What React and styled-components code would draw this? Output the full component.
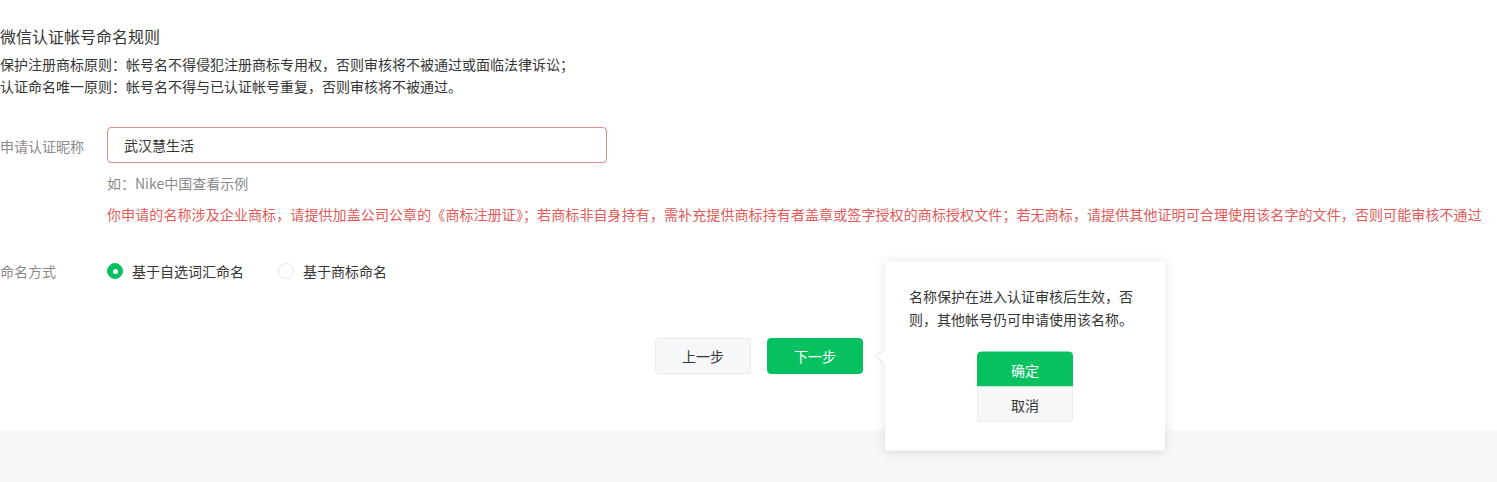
import React from "react";
import styled, { createGlobalStyle } from "styled-components";

const GlobalStyle = createGlobalStyle`
  html, body { margin: 0; padding: 0; }
  body {
    background: #f6f7f9;
    font-family: "Noto Sans CJK SC", "Noto Sans", sans-serif;
    font-size: 14px;
    color: #353535;
  }
  * { box-sizing: border-box; }
`;

const Page = styled.div`
  min-height: 100vh;
  background: #f6f7f9;
`;

const Main = styled.main`
  background: #fff;
  height: 430px;
  padding-top: 25px;
`;

const Title = styled.h2`
  margin: 0;
  font-size: 16px;
  font-weight: 400;
  line-height: 22px;
  color: #353535;
`;

const Rules = styled.div`
  margin-top: 6px;
`;

const Rule = styled.p`
  margin: 0;
  font-size: 14px;
  line-height: 22px;
  color: #353535;
`;

const FormRow = styled.div`
  display: flex;
  align-items: ${(p) => (p.$center ? "center" : "flex-start")};
  margin-top: ${(p) => p.$top}px;
`;

const Label = styled.label`
  width: 107px;
  flex: none;
  color: #8a8a8a;
  font-size: 14px;
  line-height: 20px;
  padding-top: ${(p) => p.$pt || 0}px;
`;

const Field = styled.div`
  display: flex;
  flex-direction: column;
`;

const Input = styled.input`
  width: 500px;
  height: 36px;
  padding: 0 16px;
  border: 1px solid #dd8c8c;
  border-radius: 4px;
  font-family: inherit;
  font-size: 14px;
  color: #353535;
  outline: none;
  background: #fff;
`;

const Hint = styled.div`
  margin-top: 10px;
  color: #8a8a8a;
  font-size: 14px;
  line-height: 20px;
`;

const ErrorText = styled.div`
  margin-top: 11px;
  color: #e05a58;
  font-size: 14px;
  line-height: 20px;
  letter-spacing: 0.1px;
  white-space: nowrap;
`;

const RadioGroup = styled.div`
  display: flex;
  align-items: center;
  gap: 34px;
`;

const RadioItem = styled.label`
  display: flex;
  align-items: center;
  gap: 9px;
  font-size: 14px;
  line-height: 20px;
  color: #353535;
`;

const RadioDot = styled.span`
  width: 16px;
  height: 16px;
  border-radius: 50%;
  flex: none;
  display: flex;
  align-items: center;
  justify-content: center;
  background: ${(p) => (p.$checked ? "#07c160" : "#fff")};
  border: 1px solid ${(p) => (p.$checked ? "#07c160" : "#e6e6e6")};
  &::after {
    content: "";
    width: 5px;
    height: 5px;
    border-radius: 50%;
    background: #fff;
    display: ${(p) => (p.$checked ? "block" : "none")};
  }
`;

const Actions = styled.div`
  display: flex;
  justify-content: center;
  gap: 16px;
  margin-top: 57px;
  padding-left: 21px;
`;

const Button = styled.button`
  width: 96px;
  height: 36px;
  border-radius: 4px;
  font-family: inherit;
  font-size: 14px;
  cursor: pointer;
  background: ${(p) => (p.$primary ? "#07c160" : "#f6f7f8")};
  color: ${(p) => (p.$primary ? "#fff" : "#353535")};
  border: 1px solid ${(p) => (p.$primary ? "#07c160" : "#ebebeb")};
`;

const Anchor = styled.div`
  position: relative;
`;

const Popover = styled.div`
  position: absolute;
  left: calc(100% + 22px);
  top: 50%;
  transform: translateY(-50%);
  width: 280px;
  padding: 23px 24px 28px;
  background: #fff;
  box-shadow: 0 1px 12px rgba(0, 0, 0, 0.12);
  border-radius: 2px;
  z-index: 10;
  &::before {
    content: "";
    position: absolute;
    left: -5px;
    top: 50%;
    width: 10px;
    height: 10px;
    margin-top: -5px;
    background: #fff;
    transform: rotate(45deg);
    box-shadow: -2px 2px 3px rgba(0, 0, 0, 0.05);
  }
`;

const PopText = styled.p`
  margin: 0;
  font-size: 14px;
  line-height: 23px;
  color: #353535;
`;

const PopActions = styled.div`
  display: flex;
  flex-direction: column;
  align-items: center;
  margin-top: 21px;
`;

const PopButton = styled(Button)`
  height: 35px;
  border-radius: ${(p) => (p.$primary ? "4px 4px 0 0" : "0 0 4px 4px")};
  border-color: ${(p) => (p.$primary ? "#07c160" : "#ececec")};
  ${(p) => (p.$primary ? "" : "border-top: none; height: 36px;")}
`;

export default function App() {
  return (
    <Page>
      <GlobalStyle />
      <Main>
        <Title>微信认证帐号命名规则</Title>
        <Rules>
          <Rule>保护注册商标原则：帐号名不得侵犯注册商标专用权，否则审核将不被通过或面临法律诉讼；</Rule>
          <Rule>认证命名唯一原则：帐号名不得与已认证帐号重复，否则审核将不被通过。</Rule>
        </Rules>

        <FormRow $top={30}>
          <Label $pt={9}>申请认证昵称</Label>
          <Field>
            <Input defaultValue="武汉慧生活" />
            <Hint>如：Nike中国查看示例</Hint>
            <ErrorText>
              你申请的名称涉及企业商标，请提供加盖公司公章的《商标注册证》；若商标非自身持有，需补充提供商标持有者盖章或签字授权的商标授权文件；若无商标，请提供其他证明可合理使用该名字的文件，否则可能审核不通过
            </ErrorText>
          </Field>
        </FormRow>

        <FormRow $top={37} $center>
          <Label>命名方式</Label>
          <RadioGroup>
            <RadioItem>
              <RadioDot $checked />
              基于自选词汇命名
            </RadioItem>
            <RadioItem>
              <RadioDot />
              基于商标命名
            </RadioItem>
          </RadioGroup>
        </FormRow>

        <Actions>
          <Button>上一步</Button>
          <Anchor>
            <Button $primary>下一步</Button>
            <Popover>
              <PopText>名称保护在进入认证审核后生效，否则，其他帐号仍可申请使用该名称。</PopText>
              <PopActions>
                <PopButton $primary>确定</PopButton>
                <PopButton>取消</PopButton>
              </PopActions>
            </Popover>
          </Anchor>
        </Actions>
      </Main>
    </Page>
  );
}
